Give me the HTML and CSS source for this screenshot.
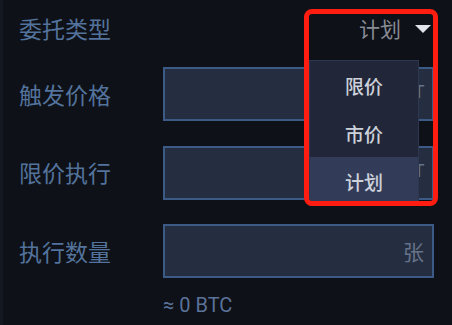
FILE: index.html
```
<!DOCTYPE html>
<html lang="zh-CN">
<head>
<meta charset="utf-8">
<link rel="stylesheet" href="styles.css">
</head>
<body>
<div class="panel">
  <div class="row row-head">
    <div class="label">委托类型</div>
    <div class="select">
      <div class="trigger">
        <span class="trigger-text">计划</span>
        <span class="caret"></span>
      </div>
      <ul class="menu">
        <li class="item">限价</li>
        <li class="item">市价</li>
        <li class="item active">计划</li>
      </ul>
      <div class="highlight"></div>
    </div>
  </div>
  <div class="row">
    <div class="label">触发价格</div>
    <div class="field"><span class="unit unit-latin">USDT</span></div>
  </div>
  <div class="row">
    <div class="label">限价执行</div>
    <div class="field"><span class="unit unit-latin">USDT</span></div>
  </div>
  <div class="row">
    <div class="label">执行数量</div>
    <div class="field"><span class="unit">张</span></div>
  </div>
  <div class="row row-note">
    <div></div>
    <div class="note">≈ 0 BTC</div>
  </div>
</div>
</body>
</html>
```
FILE: styles.css
```
* { box-sizing: border-box; }
html, body { margin: 0; padding: 0; }
body {
  width: 452px;
  height: 325px;
  background: #0e1118;
  border-left: 3px solid #141821;
  font-family: "Noto Sans CJK SC", "Noto Sans", sans-serif;
  overflow: hidden;
}
.panel {
  display: flex;
  flex-direction: column;
  gap: 24.5px;
  padding: 0 18px 0 16px;
}
.row {
  display: grid;
  grid-template-columns: 144px 1fr;
  align-items: center;
  height: 54px;
}
.row-head {
  height: 56px;
  margin-bottom: -13.5px;
}
.label {
  font-size: 23px;
  color: #53739c;
  line-height: 1;
}
.select {
  position: relative;
  height: 100%;
}
.trigger {
  display: flex;
  justify-content: flex-end;
  align-items: center;
  height: 100%;
  padding-right: 3px;
}
.trigger-text {
  font-size: 21px;
  color: #878b94;
  line-height: 1;
  margin-right: 14px;
}
.caret {
  width: 0;
  height: 0;
  border-left: 8.5px solid transparent;
  border-right: 8.5px solid transparent;
  border-top: 8px solid #e0e4ec;
  margin-top: 1px;
}
.menu {
  position: absolute;
  z-index: 2;
  top: 60px;
  right: 15px;
  width: 110px;
  margin: 0;
  padding: 0;
  list-style: none;
  background: #212738;
  border: 1px solid #2d374f;
}
.item {
  height: 48px;
  display: flex;
  align-items: center;
  justify-content: center;
  font-size: 19px;
  font-weight: 500;
  color: #cdd1da;
}
.item.active {
  background: #323b58;
}
.highlight {
  position: absolute;
  z-index: 3;
  top: 9px;
  left: 141px;
  width: 134px;
  height: 197px;
  border: 5.5px solid #ff1c10;
  border-radius: 8px;
}
.field {
  height: 54px;
  background: #252e41;
  border: 2px solid #3c5a86;
  display: flex;
  align-items: center;
  justify-content: flex-end;
  padding-right: 8px;
}
.unit {
  font-size: 21px;
  color: #66738a;
  line-height: 1;
  font-family: "Noto Sans CJK SC", sans-serif;
}
.unit-latin {
  font-family: Roboto, "Noto Sans", sans-serif;
  font-size: 18px;
  margin-right: -0.5px;
  margin-top: -4px;
}
.row-note {
  height: 24px;
  margin-top: -9.5px;
}
.note {
  font-family: Roboto, "Noto Sans", sans-serif;
  font-size: 20px;
  color: #5b7298;
  line-height: 24px;
}
```
